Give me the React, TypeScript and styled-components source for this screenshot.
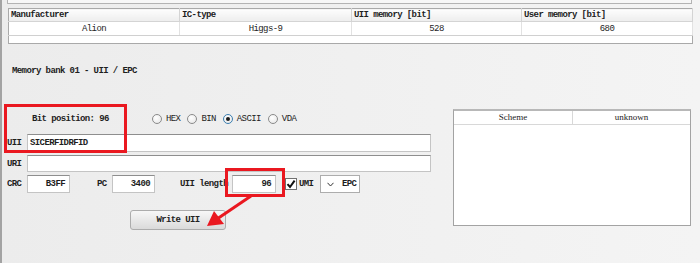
import React from 'react';
import styled, { createGlobalStyle } from 'styled-components';

const mono = `"Liberation Mono", "DejaVu Sans Mono", monospace`;

const GlobalStyle = createGlobalStyle`
  body {
    margin: 0;
    background: #efefef;
    font-family: ${mono};
    font-size: 9px;
    letter-spacing: -0.6px;
    color: #1e1e1e;
  }
`;

const Window = styled.div`
  position: relative;
  width: 700px;
  height: 263px;
  overflow: hidden;
  box-sizing: border-box;
  border-left: 2px solid #a3a3a3;
  background: linear-gradient(90deg, #ececec, #f4f4f4);
`;

const TopStrip = styled.div`
  height: 3px;
  margin: 0 8px 0 5px;
  border: 1px solid #b3b3b3;
  border-top: none;
  background: #f7f7f7;
`;

const InfoTable = styled.table`
  width: 684px;
  table-layout: fixed;
  margin: 4px 0 0 6px;
  border-collapse: collapse;
  border: 1px solid #a9a9a9;
  background: #fff;
  th {
    height: 12px;
    padding: 0 2px;
    text-align: left;
    font-weight: 700;
    background: linear-gradient(#fdfdfd, #ededed);
    border-right: 1px solid #d4d4d4;
    border-bottom: 1px solid #d4d4d4;
  }
  td {
    height: 13px;
    padding: 0;
    text-align: center;
    border-right: 1px solid #e2e2e2;
    border-bottom: 1px solid #d0d0d0;
  }
  tr.filler td {
    height: 7px;
    border: none;
  }
`;

const Heading = styled.div`
  padding: 22px 0 0 10px;
  line-height: 10px;
  font-weight: 700;
`;

const Main = styled.div`
  display: grid;
  grid-template-columns: 429px 238px;
  column-gap: 22px;
  margin-top: 31px;
`;

const FormColumn = styled.div`
  display: flex;
  flex-direction: column;
  gap: 3px;
`;

const BitRow = styled.div`
  display: flex;
  align-items: center;
  height: 24px;
  padding-left: 30px;
`;

const BitLabel = styled.span`
  width: 120px;
  font-weight: 700;
`;

const RadioGroup = styled.div`
  display: flex;
  align-items: center;
  gap: 7px;
`;

const RadioItem = styled.label`
  display: flex;
  align-items: center;
  gap: 4px;
`;

const RadioCircle = styled.span<{ $on?: boolean }>`
  position: relative;
  width: 10px;
  height: 10px;
  box-sizing: border-box;
  border-radius: 50%;
  border: 1px solid ${(p) => (p.$on ? '#3c7fb1' : '#8a8a8a')};
  background: radial-gradient(circle at 40% 35%, #ffffff, #e4e4e4);
  &::after {
    content: '';
    display: ${(p) => (p.$on ? 'block' : 'none')};
    position: absolute;
    left: 2px;
    top: 2px;
    width: 4px;
    height: 4px;
    border-radius: 50%;
    background: #1a1a1a;
  }
`;

const FieldRow = styled.div<{ $h?: number }>`
  display: flex;
  align-items: center;
  height: ${(p) => p.$h ?? 17}px;
`;

const FieldLabel = styled.span<{ $w?: number; $ml?: number }>`
  width: ${(p) => p.$w ?? 20}px;
  margin-left: ${(p) => p.$ml ?? 5}px;
  font-weight: 700;
  white-space: nowrap;
  overflow: hidden;
`;

const TextBox = styled.div<{ $w?: number; $right?: boolean }>`
  ${(p) => (p.$w ? `width: ${p.$w}px;` : 'flex: 1;')}
  height: 100%;
  box-sizing: border-box;
  display: flex;
  align-items: center;
  justify-content: ${(p) => (p.$right ? 'flex-end' : 'flex-start')};
  padding: 0 4px 0 2px;
  background: #fff;
  border: 1px solid #c4c4c4;
  border-top-color: #8e8e8e;
  font-weight: 700;
`;

const CheckBox = styled.span`
  display: flex;
  align-items: center;
  justify-content: center;
  width: 12px;
  height: 12px;
  box-sizing: border-box;
  margin-left: 9px;
  border: 1px solid #707070;
  background: #fff;
`;

const CheckText = styled.span`
  margin-left: 2px;
  width: 21px;
  font-weight: 700;
`;

const Select = styled.div`
  display: flex;
  align-items: center;
  gap: 8px;
  width: 40px;
  height: 100%;
  box-sizing: border-box;
  padding-left: 6px;
  background: #fff;
  border: 1px solid #adadad;
  font-weight: 700;
`;

const WriteButton = styled.button`
  width: 96px;
  height: 20px;
  margin: 14px 0 0 128px;
  padding: 0;
  font-family: ${mono};
  font-size: 9px;
  letter-spacing: -0.6px;
  font-weight: 700;
  color: #222;
  border: 1px solid #acacac;
  border-radius: 3px;
  background: linear-gradient(#f7f7f7, #dadada);
`;

const SchemePanel = styled.div`
  margin-top: 2px;
  height: 117px;
  box-sizing: border-box;
  border: 1px solid #a3a3a3;
  border-top: 2px solid #b8b8b8;
  background: #fff;
`;

const SchemeHead = styled.div`
  display: grid;
  grid-template-columns: 1fr 1fr;
  height: 13px;
  border-bottom: 1px solid #d8d8d8;
  font-family: "Liberation Serif", serif;
  font-size: 9px;
  letter-spacing: 0;
  line-height: 13px;
  text-align: center;
  span + span {
    border-left: 1px solid #d8d8d8;
  }
`;

const RedBox = styled.div<{ $x: number; $y: number; $w: number; $h: number }>`
  position: absolute;
  left: ${(p) => p.$x}px;
  top: ${(p) => p.$y}px;
  width: ${(p) => p.$w}px;
  height: ${(p) => p.$h}px;
  box-sizing: border-box;
  border: 3px solid #ea1820;
  pointer-events: none;
`;

const Overlay = styled.svg`
  position: absolute;
  left: -2px;
  top: 0;
  pointer-events: none;
`;

const formats = ['HEX', 'BIN', 'ASCII', 'VDA'];

const App = () => {
  return (
    <>
      <GlobalStyle />
      <Window>
        <TopStrip />
        <InfoTable>
          <colgroup>
            <col style={{ width: 171 }} />
            <col style={{ width: 172 }} />
            <col style={{ width: 170 }} />
            <col style={{ width: 171 }} />
          </colgroup>
          <thead>
            <tr>
              <th>Manufacturer</th>
              <th>IC-type</th>
              <th>UII memory [bit]</th>
              <th>User memory [bit]</th>
            </tr>
          </thead>
          <tbody>
            <tr>
              <td>Alion</td>
              <td>Higgs-9</td>
              <td>528</td>
              <td>680</td>
            </tr>
            <tr className='filler'>
              <td colSpan={4}></td>
            </tr>
          </tbody>
        </InfoTable>

        <Heading>Memory bank 01 - UII / EPC</Heading>

        <Main>
          <FormColumn>
            <BitRow>
              <BitLabel>Bit position: 96</BitLabel>
              <RadioGroup>
                {formats.map((f) => (
                  <RadioItem key={f}>
                    <RadioCircle $on={f === 'ASCII'} />
                    {f}
                  </RadioItem>
                ))}
              </RadioGroup>
            </BitRow>

            <FieldRow $h={18}>
              <FieldLabel>UII</FieldLabel>
              <TextBox>SICERFIDRFID</TextBox>
            </FieldRow>
            <FieldRow $h={17}>
              <FieldLabel>URI</FieldLabel>
              <TextBox />
            </FieldRow>
            <FieldRow $h={18}>
              <FieldLabel>CRC</FieldLabel>
              <TextBox $w={43} $right>B3FF</TextBox>
              <FieldLabel $ml={27} $w={15}>PC</FieldLabel>
              <TextBox $w={43} $right>3400</TextBox>
              <FieldLabel $ml={25} $w={52}>UII length</FieldLabel>
              <TextBox $w={44} $right>96</TextBox>
              <CheckBox>
                <svg width='10' height='10' viewBox='0 0 10 10'>
                  <path d='M1.5 5.2 L4 8 L8.6 1.6' fill='none' stroke='#111' strokeWidth='2' />
                </svg>
              </CheckBox>
              <CheckText>UMI</CheckText>
              <Select>
                <svg width='7' height='5' viewBox='0 0 7 5'>
                  <path d='M0.5 0.8 L3.5 4 L6.5 0.8' fill='none' stroke='#333' strokeWidth='1' />
                </svg>
                EPC
              </Select>
            </FieldRow>

            <WriteButton>Write UII</WriteButton>
          </FormColumn>

          <SchemePanel>
            <SchemeHead>
              <span>Scheme</span>
              <span>unknown</span>
            </SchemeHead>
          </SchemePanel>
        </Main>

        <RedBox $x={2} $y={104} $w={123} $h={49} />
        <RedBox $x={223} $y={168} $w={60} $h={29} />
        <Overlay width='700' height='263' viewBox='0 0 700 263'>
          <line x1='251' y1='196' x2='217' y2='219' stroke='#ea1820' strokeWidth='3' />
          <polygon points='207,226 214,211 224,224' fill='#ea1820' />
        </Overlay>
      </Window>
    </>
  );
};

export default App;
